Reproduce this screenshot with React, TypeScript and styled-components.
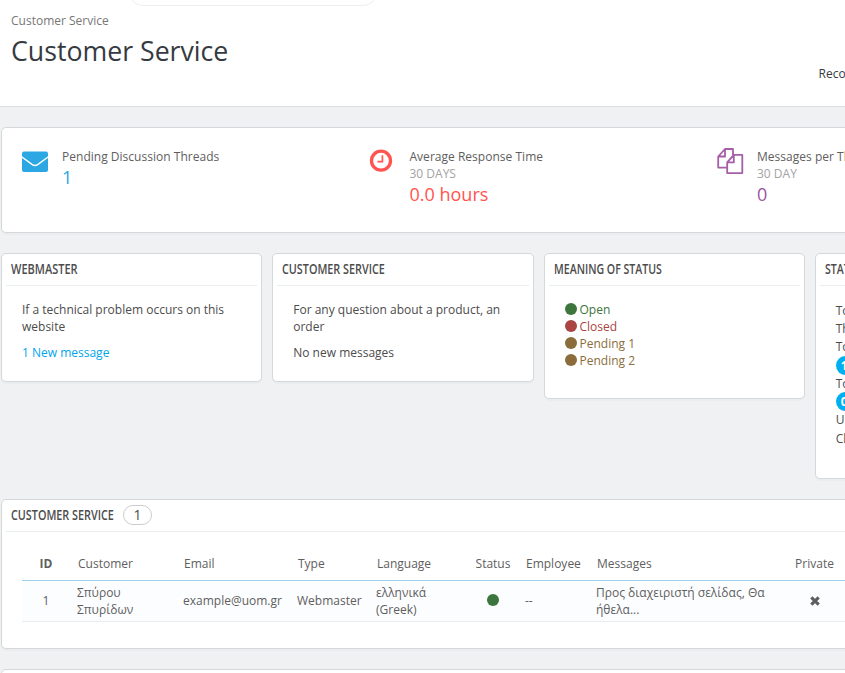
import React from "react";
import styled, { createGlobalStyle } from "styled-components";

const Global = createGlobalStyle`
  * { box-sizing: border-box; }
  html, body { margin: 0; height: 673px; overflow: hidden; background: #eff1f2; }
  body { font: 12px/17px "Open Sans", "Noto Sans", sans-serif; color: #4c4c4c; }
  p { margin: 0; }
`;

const Page = styled.div`
  width: 845px;
  height: 673px;
  overflow: hidden;
`;

const Header = styled.header`
  position: relative;
  height: 107px;
  padding: 12px 0 0 11px;
  background: #fff;
  border-bottom: 1px solid #dcdee0;
`;

const SearchEdge = styled.div`
  position: absolute;
  top: -24px;
  left: 128px;
  width: 250px;
  height: 30px;
  border: 1px solid #eee;
  border-radius: 15px;
`;

const Crumb = styled.div`
  color: #777;
`;

const Title = styled.h1`
  margin: 4px 0 0;
  font-size: 26.7px;
  line-height: 36px;
  font-weight: 400;
  color: #363a41;
`;

const HeaderLink = styled.div`
  position: absolute;
  top: 65px;
  left: 818.5px;
  white-space: nowrap;
  color: #363a41;
`;

const Content = styled.main`
  width: 1075px;
  margin: 20px 0 0 1px;
  display: flex;
  flex-direction: column;
  gap: 20px;
`;

const Panel = styled.section<{ $height: number }>`
  height: ${(p) => p.$height}px;
  background: #fff;
  border: 1px solid #d3d8db;
  border-radius: 5px;
  box-shadow: 0 2px 0 rgba(0, 0, 0, 0.02);
`;

const Stats = styled.div`
  display: grid;
  grid-template-columns: repeat(3, 347.5px);
  padding: 20px;
`;

const Stat = styled.div`
  display: grid;
  grid-template-columns: 40px 1fr;
  white-space: nowrap;
`;

const StatLabel = styled.div`
  color: #5e5e5e;
  letter-spacing: 0.02px;
`;

const StatPeriod = styled.div`
  color: #a3a3a3;
  text-transform: uppercase;
`;

const StatValue = styled.div<{ $color: string }>`
  font-size: 18px;
  line-height: 25px;
  color: ${(p) => p.$color};
`;

const Columns = styled.div`
  display: grid;
  grid-template-columns: repeat(4, 261.25px);
  gap: 10px;
  align-items: start;
`;

const Heading = styled.h3`
  display: flex;
  align-items: center;
  height: 32px;
  margin: 0 4px;
  padding: 0 0 2px 5px;
  border-bottom: 1px solid #eaedef;
  font-weight: 500;
  font-size: 14px;
  color: #4c4c4c;
`;

const HeadingText = styled.span<{ $width: number; $scale: number }>`
  flex: none;
  width: ${(p) => p.$width}px;
  white-space: nowrap;
  text-transform: uppercase;
  font-weight: 600;
  transform: scaleX(${(p) => p.$scale});
  transform-origin: left center;
`;

const Count = styled.span`
  width: 29px;
  height: 20px;
  margin-left: 9px;
  border: 1px solid #ccc;
  border-radius: 10px;
  line-height: 18px;
  text-align: center;
`;

const Body = styled.div`
  padding: 15px 20px;
`;

const Message = styled.p<{ $link?: boolean }>`
  margin-top: 9px;
  color: ${(p) => (p.$link ? "#00a5ec" : "inherit")};
`;

const StatusRow = styled.div<{ $color: string }>`
  display: flex;
  align-items: flex-start;
  gap: 3px;
  height: 17px;
  color: ${(p) => p.$color};
`;

const Dot = styled.span<{ $color: string }>`
  flex: none;
  width: 12px;
  height: 12px;
  border-radius: 50%;
  background: ${(p) => p.$color};
`;

const StatusList = styled.div`
  padding: 15px 20px;

  ${Dot} {
    margin-top: 2px;
  }
`;

const Figures = styled.div`
  padding: 16px 20px;
`;

const Figure = styled.div<{ $height: number }>`
  height: ${(p) => p.$height}px;
  line-height: 18px;
  white-space: nowrap;
`;

const Badge = styled.span`
  display: block;
  width: 24px;
  height: 19px;
  border-radius: 10px;
  background: #00aff0;
  color: #fff;
  font-weight: 700;
  line-height: 19px;
  padding-left: 5px;
`;

const Table = styled.table`
  table-layout: fixed;
  width: 1033px;
  margin: 15px 20px 0;
  border-collapse: separate;
  border-spacing: 0;
  color: #5e5e5e;
`;

const Th = styled.th<{ $width: number; $bold?: boolean; $center?: boolean }>`
  width: ${(p) => p.$width}px;
  height: 34px;
  padding: ${(p) => (p.$center ? "0 2px 1px 0" : "0 0 1px 6px")};
  border-bottom: 1px solid #a0d0eb;
  font-weight: ${(p) => (p.$bold ? 700 : 400)};
  text-align: ${(p) => (p.$center ? "center" : "left")};
`;

const Td = styled.td<{ $center?: boolean }>`
  height: 41px;
  padding: ${(p) => (p.$center ? "0 2px 1px 0" : "0 0 1px 5px")};
  background: #fcfdfe;
  border-bottom: 1px solid #eaedef;
  text-align: ${(p) => (p.$center ? "center" : "left")};
  vertical-align: middle;
`;

const Icon = styled.svg`
  display: block;
  overflow: visible;
`;

const EnvelopeIcon = () => (
  <Icon width="27" height="27" viewBox="0 0 27 27">
    <rect y="3.5" width="26" height="20.5" rx="2" fill="#2ba8e3" />
    <path d="M-.4 8.7 L10 16.4 Q13 18.5 16 16.4 L26.4 8.7" fill="none" stroke="#fff" strokeWidth="1.4" />
  </Icon>
);

const ClockIcon = () => (
  <Icon width="24" height="27" viewBox="0 0 24 27">
    <circle cx="11" cy="12.7" r="9.5" fill="none" stroke="#ff5450" strokeWidth="3.3" />
    <path d="M12.4 7.3V13.7H7.5" fill="none" stroke="#ff5450" strokeWidth="1.7" />
  </Icon>
);

const FilesIcon = () => (
  <Icon width="27" height="27" viewBox="0 0 27 27" fill="none" stroke="#a55fa8" strokeWidth="1.8" strokeLinejoin="round">
    <path d="M10 19.6H1.2V8.5L8 1H16V7.6M8 1V8.5H1.2" />
    <path d="M10.2 25.1V14.4L16.8 6.9H25.3V25.1ZM16.8 6.9V14.4H10.2" />
  </Icon>
);

const CrossIcon = () => (
  <Icon width="12" height="12" viewBox="0 0 12 12">
    <path d="M2.3 2.3L9.7 9.7M9.7 2.3L2.3 9.7" stroke="#5e5e5e" strokeWidth="3.1" />
  </Icon>
);

const CenterIcon = styled.div`
  display: flex;
  justify-content: center;
  padding: 0 1px 1px 0;
`;

const CenterCross = styled(CenterIcon)`
  padding: 0;
`;

const statuses = [
  ["Open", "#3c763d"],
  ["Closed", "#a94442"],
  ["Pending 1", "#8a6d3b"],
  ["Pending 2", "#8a6d3b"],
];

export default function App() {
  return (
    <Page>
      <Global />
      <Header>
        <SearchEdge />
        <Crumb>Customer Service</Crumb>
        <Title>Customer Service</Title>
        <HeaderLink>Recommended Modules</HeaderLink>
      </Header>
      <Content>
        <Panel $height={106}>
          <Stats>
            <Stat>
              <EnvelopeIcon />
              <div>
                <StatLabel>Pending Discussion Threads</StatLabel>
                <StatValue $color="#2ba8e3">1</StatValue>
              </div>
            </Stat>
            <Stat>
              <ClockIcon />
              <div>
                <StatLabel>Average Response Time</StatLabel>
                <StatPeriod>30 days</StatPeriod>
                <StatValue $color="#ff5450">0.0 hours</StatValue>
              </div>
            </Stat>
            <Stat>
              <FilesIcon />
              <div>
                <StatLabel>Messages per Thread</StatLabel>
                <StatPeriod>30 day</StatPeriod>
                <StatValue $color="#9b55a0">0</StatValue>
              </div>
            </Stat>
          </Stats>
        </Panel>

        <Columns>
          <Panel $height={129}>
            <Heading><HeadingText $width={67} $scale={0.785}>Webmaster</HeadingText></Heading>
            <Body>
              <p>If a technical problem occurs on this website</p>
              <Message $link>1 New message</Message>
            </Body>
          </Panel>
          <Panel $height={129}>
            <Heading><HeadingText $width={103} $scale={0.771}>Customer Service</HeadingText></Heading>
            <Body>
              <p>For any question about a product, an order</p>
              <Message>No new messages</Message>
            </Body>
          </Panel>
          <Panel $height={146}>
            <Heading><HeadingText $width={108} $scale={0.755}>Meaning of status</HeadingText></Heading>
            <StatusList>
              {statuses.map(([label, color]) => (
                <StatusRow key={label} $color={color}>
                  <Dot $color={color} />
                  {label}
                </StatusRow>
              ))}
            </StatusList>
          </Panel>
          <Panel $height={226}>
            <Heading><HeadingText $width={67} $scale={0.755}>Statistics</HeadingText></Heading>
            <Figures>
              <Figure $height={18}>Total threads</Figure>
              <Figure $height={18}>Threads pending</Figure>
              <Figure $height={18}>Total number of customer messages</Figure>
              <Badge>1</Badge>
              <Figure $height={17}>Total number of employee messages</Figure>
              <Badge>0</Badge>
              <Figure $height={19}>Unread threads</Figure>
              <Figure $height={18}>Closed threads</Figure>
            </Figures>
          </Panel>
        </Columns>

        <Panel $height={150}>
          <Heading>
            <HeadingText $width={103} $scale={0.771}>Customer Service</HeadingText>
            <Count>1</Count>
          </Heading>
          <Table>
            <thead>
              <tr>
                <Th $width={50} $bold $center>ID</Th>
                <Th $width={106}>Customer</Th>
                <Th $width={114}>Email</Th>
                <Th $width={79}>Type</Th>
                <Th $width={97}>Language</Th>
                <Th $width={52} $center>Status</Th>
                <Th $width={71}>Employee</Th>
                <Th $width={198}>Messages</Th>
                <Th $width={53} $center>Private</Th>
                <Th $width={213} />
              </tr>
            </thead>
            <tbody>
              <tr>
                <Td $center>1</Td>
                <Td>Σπύρου<br />Σπυρίδων</Td>
                <Td>example@uom.gr</Td>
                <Td>Webmaster</Td>
                <Td>ελληνικά<br />(Greek)</Td>
                <Td $center><CenterIcon><Dot $color="#3c763d" /></CenterIcon></Td>
                <Td>--</Td>
                <Td>Προς διαχειριστή σελίδας, Θα<br />ήθελα...</Td>
                <Td $center><CenterCross><CrossIcon /></CenterCross></Td>
                <Td />
              </tr>
            </tbody>
          </Table>
        </Panel>
        <Panel $height={80} />
      </Content>
    </Page>
  );
}
